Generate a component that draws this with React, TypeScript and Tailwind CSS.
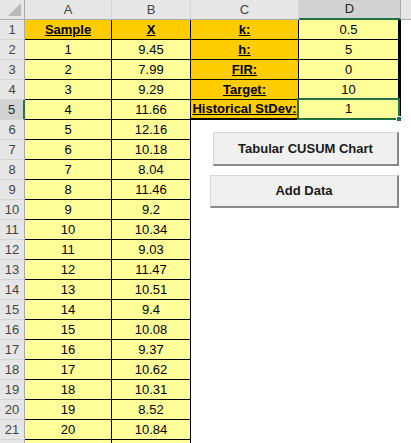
import React from 'react';

const samples = ['9.45', '7.99', '9.29', '11.66', '12.16', '10.18', '8.04', '11.46', '9.2', '10.34', '9.03', '11.47', '10.51', '9.4', '10.08', '9.37', '10.62', '10.31', '8.52', '10.84'];

const params = [
  { label: 'k:', value: '0.5' },
  { label: 'h:', value: '5' },
  { label: 'FIR:', value: '0' },
  { label: 'Target:', value: '10' },
  { label: 'Historical StDev:', value: '1' },
];

const colHead = 'flex items-center justify-center border-r border-b border-r-[#d4d4d4] border-b-[#ababab] bg-[#e6e6e6] text-[13px] text-[#444]';
const rowHead = 'flex items-center justify-center border-r border-b border-r-[#ababab] border-b-[#d4d4d4] bg-[#e6e6e6] text-[13px] text-[#444]';
const cell = 'flex items-center justify-center border-r border-b border-black text-[13px] text-black whitespace-nowrap';

function SheetButton({ label, className }: { label: string; className: string }) {
  return (
    <button
      className={`absolute flex items-center justify-center border border-[#d9d9d9] border-b-2 border-r-2 border-b-[#8a8a8a] border-r-[#8a8a8a] bg-[#f0f0f0] text-[13px] font-bold text-[#1a1a1a] ${className}`}
    >
      {label}
    </button>
  );
}

export default function App() {
  const rows = Array.from({ length: 22 }, (_, i) => i + 1);

  return (
    <div className="relative h-[443px] w-[411px] overflow-hidden bg-white font-['Liberation_Sans',Arial,sans-serif]">
      <div className="grid grid-cols-[25px_87px_79px_108px_102px_1fr] auto-rows-[20px]">
        {/* column headers */}
        <div className="relative border-r border-b border-r-[#ababab] border-b-[#ababab] bg-[#e6e6e6]">
          <svg className="absolute bottom-[3px] right-[3px]" width="13" height="13" viewBox="0 0 13 13">
            <polygon points="13,0 13,13 0,13" fill="#b9b9b9" />
          </svg>
        </div>
        <div className={colHead}>A</div>
        <div className={colHead}>B</div>
        <div className={colHead}>C</div>
        <div className="flex items-center justify-center border-r border-b-2 border-r-[#ababab] border-b-[#217346] bg-[#d2d2d2] text-[13px] text-[#262626]">
          D
        </div>
        <div className="border-b border-b-[#ababab] bg-[#e6e6e6]" />

        {rows.map((r) => {
          const isData = r >= 2 && r <= 21;
          const param = params[r - 1];
          return (
            <React.Fragment key={r}>
              {r === 5 ? (
                <div className="flex items-center justify-center border-r-2 border-b border-r-[#217346] border-b-[#d4d4d4] bg-[#d2d2d2] text-[13px] text-[#262626]">
                  {r}
                </div>
              ) : (
                <div className={rowHead}>{r <= 21 ? r : ''}</div>
              )}

              {r === 1 ? (
                <>
                  <div className={`${cell} bg-[#ffcc00] font-bold underline`}>Sample</div>
                  <div className={`${cell} bg-[#ffcc00] font-bold underline`}>X</div>
                </>
              ) : (
                <>
                  <div className={`${cell} bg-[#ffff99]`}>{isData ? r - 1 : ''}</div>
                  <div className={`${cell} bg-[#ffff99]`}>{isData ? samples[r - 2] : ''}</div>
                </>
              )}

              {param ? (
                <>
                  <div className={`${cell} bg-[#ffcc00] font-bold underline ${r === 5 ? 'border-b-2' : ''}`}>
                    {param.label}
                  </div>
                  <div className={`${cell} border-r-[3px] bg-[#ffff99] ${r === 5 ? 'border-b-2' : ''}`}>
                    {param.value}
                  </div>
                </>
              ) : (
                <>
                  <div />
                  <div />
                </>
              )}
              <div />
            </React.Fragment>
          );
        })}
      </div>

      {/* active cell D5 */}
      <div className="pointer-events-none absolute left-[297px] top-[98px] h-[22px] w-[103px] border-2 border-[#217346]" />
      <div className="pointer-events-none absolute left-[396px] top-[116px] h-[6px] w-[6px] border border-white bg-[#217346]" />

      <SheetButton label="Tabular CUSUM Chart" className="left-[213px] top-[132px] h-[34px] w-[186px]" />
      <SheetButton label="Add Data" className="left-[210px] top-[175px] h-[33px] w-[189px]" />
    </div>
  );
}
